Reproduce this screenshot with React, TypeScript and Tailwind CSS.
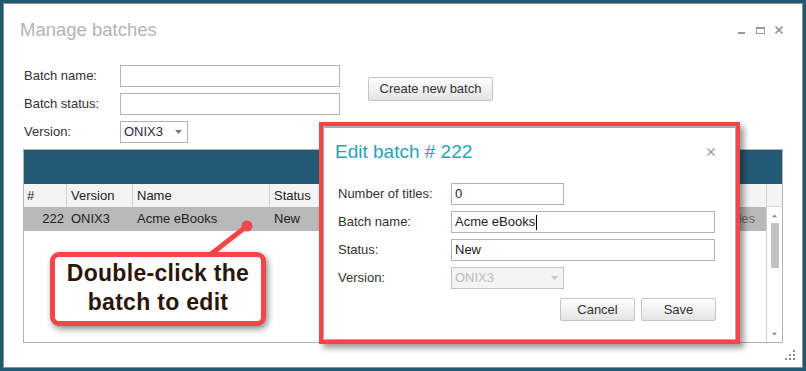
import React from "react";

const font = "font-['Liberation_Sans',Arial,sans-serif]";

function Arrow({ color }: { color: string }) {
  return (
    <svg width="7" height="4" viewBox="0 0 7 4">
      <path d="M0 0 L7 0 L3.5 4 Z" fill={color} />
    </svg>
  );
}

function Field({ label, value, width, cursor }: { label: string; value?: string; width: string; cursor?: boolean }) {
  return (
    <div className="flex items-center">
      <span className="w-[113px] text-[13px] text-[#333]">{label}</span>
      <div className={`${width} h-[22px] border border-[#b3b3b3] bg-white pl-[3px] flex items-center text-[13px] text-[#222]`}>
        {value}
        {cursor && <span className="ml-[1px] h-[15px] border-l border-black" />}
      </div>
    </div>
  );
}

export default function App() {
  const cols = "grid grid-cols-[43px_66px_137px_120px_1fr]";
  return (
    <div className={`w-[806px] h-[371px] bg-[#235a73] p-[3px] ${font}`}>
      <div className="relative h-full border border-[#8e8e8e] bg-white">
        {/* title bar */}
        <div className="flex items-center justify-between pt-[15px] pl-[16px] pr-[19px]">
          <h1 className="text-[18.5px] leading-[22px] text-[#b4b4b4]">Manage batches</h1>
          <div className="flex items-center gap-[10px]">
            <span className="mt-[5px] w-[7px] h-[2px] bg-[#9a9a9a]" />
            <span className="ml-[1px] w-[9px] h-[7px] border border-t-2 border-[#9a9a9a]" />
            <svg width="8" height="8" viewBox="0 0 8 8">
              <path d="M0.5 0.5 L7.5 7.5 M7.5 0.5 L0.5 7.5" stroke="#9a9a9a" strokeWidth="1.6" />
            </svg>
          </div>
        </div>

        {/* filter form */}
        <div className="flex ml-[20px] mt-[24px]">
          <div className="flex flex-col gap-[6px] text-[13px] text-[#333]">
            <div className="flex items-center">
              <span className="w-[96px]">Batch name:</span>
              <div className="w-[220px] h-[22px] border border-[#b3b3b3]" />
            </div>
            <div className="flex items-center">
              <span className="w-[96px]">Batch status:</span>
              <div className="w-[220px] h-[22px] border border-[#b3b3b3]" />
            </div>
            <div className="flex items-center">
              <span className="w-[96px]">Version:</span>
              <div className="w-[68px] h-[22px] border border-[#b3b3b3] flex items-center justify-between pl-[3px] pr-[5px] text-[#1f2a44]">
                ONIX3
                <Arrow color="#777" />
              </div>
            </div>
          </div>
          <button className="ml-[28px] mt-[12px] h-[24px] w-[125px] rounded-[2px] border border-[#c4c4c4] bg-gradient-to-b from-white to-[#e4e4e4] text-[13px] text-[#333]">
            Create new batch
          </button>
        </div>

        {/* batches table */}
        <div className="ml-[19px] mt-[6px] w-[760px] h-[194px] border border-[#b3b3b3] flex flex-col">
          <div className="h-[34px] bg-[#235a73]" />
          <div className="flex flex-1 text-[13px] text-[#222]">
            <div className="flex-1 flex flex-col">
              <div className={`${cols} h-[23px] bg-[#f4f4f4] items-center`}>
                <span className="pl-[3px] h-full flex items-center border-r border-[#d0d0d0]">#</span>
                <span className="pl-[4px] h-full flex items-center border-r border-[#d0d0d0]">Version</span>
                <span className="pl-[4px] h-full flex items-center border-r border-[#d0d0d0]">Name</span>
                <span className="pl-[4px] h-full flex items-center">Status</span>
                <span />
              </div>
              <div className={`${cols} h-[24px] bg-[#b9b9b9] items-center`}>
                <span className="text-right pr-[3px]">222</span>
                <span className="pl-[4px]">ONIX3</span>
                <span className="pl-[4px]">Acme eBooks</span>
                <span className="pl-[4px]">New</span>
                <span className="text-right pr-[11px] text-[#6a6a6a]">Titles</span>
              </div>
            </div>
            <div className="w-[16px] flex flex-col border-l border-[#cfcfcf]">
              <div className="h-[23px] bg-[#f4f4f4] border-b border-[#d8d8d8]" />
              <div className="flex-1 flex flex-col items-center">
                <div className="mt-[7px] rotate-180 scale-75">
                  <Arrow color="#888" />
                </div>
                <div className="mt-[5px] w-[8px] h-[45px] bg-[#c2c2c2]" />
                <div className="mt-auto mb-[6px] scale-75">
                  <Arrow color="#888" />
                </div>
              </div>
            </div>
          </div>
        </div>

        {/* callout pointer */}
        <svg className="absolute left-[186px] top-[208px]" width="66" height="50" viewBox="0 0 66 50">
          <line x1="16" y1="46" x2="57" y2="14" stroke="#f44548" strokeWidth="5" />
          <circle cx="57" cy="14" r="5.5" fill="#f44548" />
        </svg>

        {/* callout */}
        <div className="absolute left-[46px] top-[248px] w-[216px] h-[74px] rounded-[9px] border-[5px] border-[#f44548] bg-white shadow-[2px_3px_6px_rgba(0,0,0,0.45)] pt-[2px] text-center text-[23px] leading-[29px] tracking-[0.3px] font-bold text-[#2b1408]">
          Double-click the
          <br />
          batch to edit
        </div>

        {/* edit dialog */}
        <div className="absolute left-[315px] top-[118px] w-[421px] h-[222px] border-4 border-[#f44548] bg-white shadow-[4px_4px_6px_rgba(0,0,0,0.4)]">
          <div className="relative h-full border border-t-2 border-[#ababab] bg-white">
            <h2 className="pt-[13px] pl-[11px] text-[19px] leading-[22px] text-[#2aa3b6]">Edit batch # 222</h2>
            <svg className="absolute right-[20px] top-[20px]" width="8" height="8" viewBox="0 0 8 8">
              <path d="M0.5 0.5 L7.5 7.5 M7.5 0.5 L0.5 7.5" stroke="#a0a0a0" strokeWidth="1.5" />
            </svg>
            <div className="mt-[20px] pl-[14px] pr-[19px] flex flex-col gap-[6px]">
              <Field label="Number of titles:" value="0" width="w-[113px]" />
              <Field label="Batch name:" value="Acme eBooks" width="w-[264px]" cursor />
              <Field label="Status:" value="New" width="w-[264px]" />
              <div className="flex items-center">
                <span className="w-[113px] text-[13px] text-[#333]">Version:</span>
                <div className="w-[113px] h-[22px] border border-[#c2c2c2] bg-[#f4f4f4] pl-[3px] pr-[5px] flex items-center justify-between text-[13px] text-[#bdbdbd]">
                  ONIX3
                  <Arrow color="#c8c8c8" />
                </div>
              </div>
              <div className="mt-[3px] flex justify-end gap-[6px]">
                <button className="w-[75px] h-[23px] rounded-[2px] border border-[#c4c4c4] bg-gradient-to-b from-white to-[#e4e4e4] text-[13px] text-[#333]">
                  Cancel
                </button>
                <button className="w-[75px] h-[23px] rounded-[2px] border border-[#c4c4c4] bg-gradient-to-b from-white to-[#e4e4e4] text-[13px] text-[#333]">
                  Save
                </button>
              </div>
            </div>
          </div>
        </div>

        {/* resize grip */}
        <svg className="absolute right-[6px] bottom-[6px]" width="12" height="12" viewBox="0 0 12 12">
          <g fill="#8a8a8a">
            <rect x="9" y="1" width="2" height="2" />
            <rect x="5" y="5" width="2" height="2" />
            <rect x="9" y="5" width="2" height="2" />
            <rect x="1" y="9" width="2" height="2" />
            <rect x="5" y="9" width="2" height="2" />
            <rect x="9" y="9" width="2" height="2" />
          </g>
        </svg>
      </div>
    </div>
  );
}
